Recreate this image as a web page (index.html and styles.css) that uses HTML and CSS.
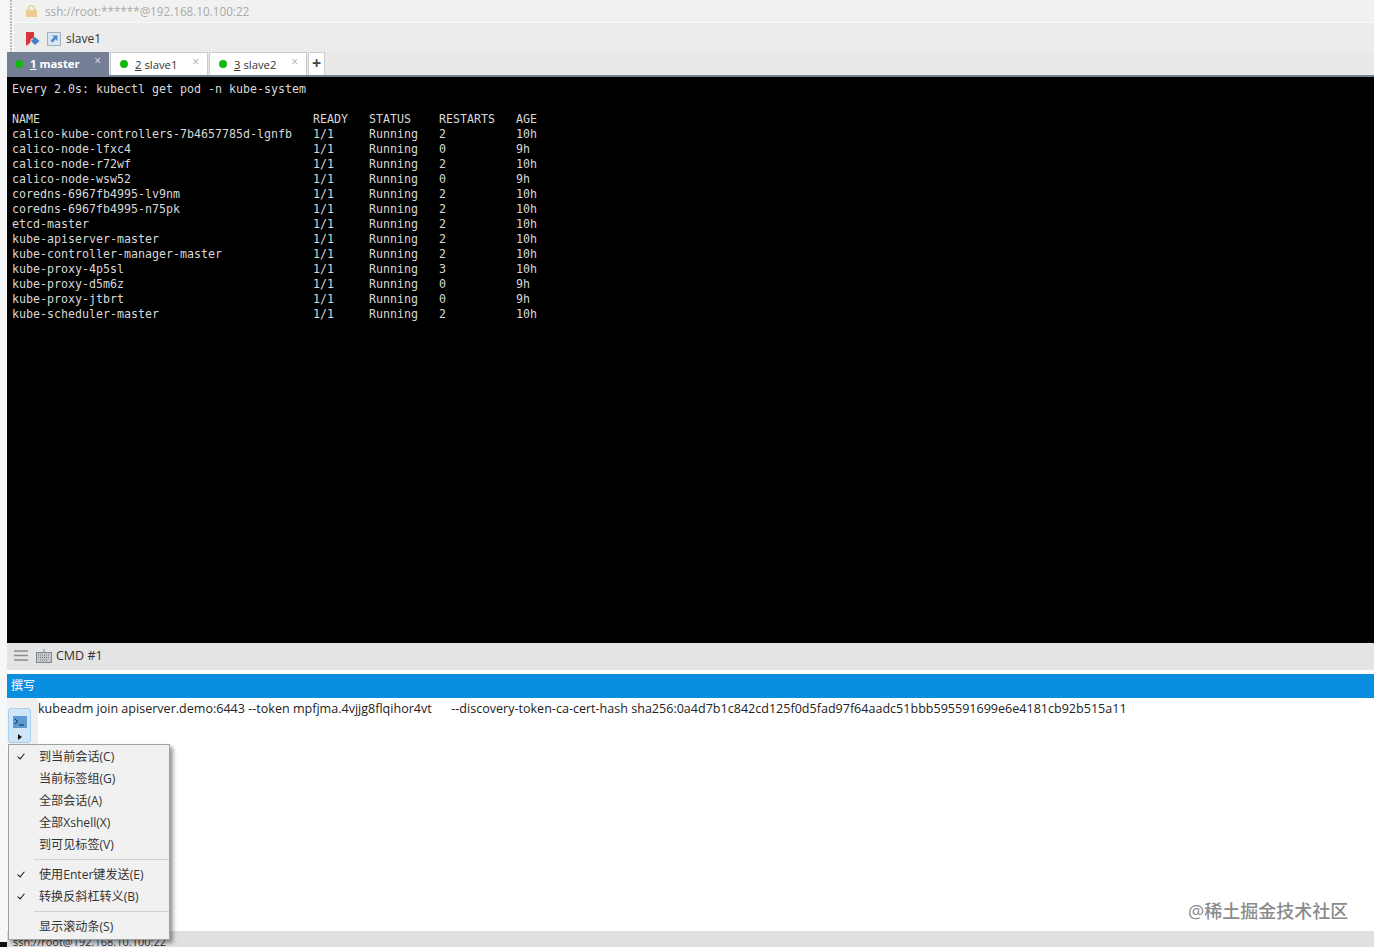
FILE: index.html
```html
<!DOCTYPE html>
<html lang="zh">
<head>
  <meta charset="UTF-8" />
  <title>Xshell</title>
  <link rel="stylesheet" href="styles.css">
</head>
<body>
  <div class="left-strip">
    <div class="strip-corner"></div>
  </div>
  <div class="app">

    <div class="top">
      <div class="grip"></div>
      <div class="top-rows">
        <!-- Address bar -->
        <div class="address-bar">
          <svg class="lock" width="11" height="12" viewBox="0 0 11 12">
            <path d="M2.500 5V3.500a3 3 0 0 1 6 0V5" fill="none" stroke="#e8cfa0" stroke-width="1.500"/>
            <rect y="5" width="11" height="7" fill="#eccb94"/>
          </svg>
          <span>ssh://root:******@192.168.10.100:22</span>
        </div>

        <!-- Links bar -->
        <div class="links-bar">
          <svg class="flag" width="14" height="14" viewBox="0 0 14 14">
            <path d="M0 0h8v6l-3 1-1 4-4 3z" fill="#d8343c"/>
            <path d="M9 5l4.500 4-4.500 4-4-4z" fill="#3f7fc4"/>
          </svg>
          <svg width="14" height="14" viewBox="0 0 14 14">
            <rect x=".5" y=".5" width="13" height="13" fill="#dbe6f0" stroke="#9fb0c0"/>
            <path d="M5 3.500h5.500v5.500l-1.800-1.800-3.200 3.200-1.900-1.900 3.200-3.200z" fill="#4a8cc8"/>
          </svg>
          <span>slave1</span>
        </div>
      </div>
    </div>

    <!-- Session tabs -->
    <div class="tabs">
      <div class="tab active">
        <i class="dot"></i><span class="tab-name"><u>1</u> master</span><span class="close">×</span>
      </div>
      <div class="tab">
        <i class="dot"></i><span class="tab-name"><u>2</u> slave1</span><span class="close">×</span>
      </div>
      <div class="tab">
        <i class="dot"></i><span class="tab-name"><u>3</u> slave2</span><span class="close">×</span>
      </div>
      <div class="tab-add">+</div>
    </div>

    <!-- Terminal -->
<pre class="terminal">Every 2.0s: kubectl get pod -n kube-system

NAME                                       READY   STATUS    RESTARTS   AGE
calico-kube-controllers-7b4657785d-lgnfb   1/1     Running   2          10h
calico-node-lfxc4                          1/1     Running   0          9h
calico-node-r72wf                          1/1     Running   2          10h
calico-node-wsw52                          1/1     Running   0          9h
coredns-6967fb4995-lv9nm                   1/1     Running   2          10h
coredns-6967fb4995-n75pk                   1/1     Running   2          10h
etcd-master                                1/1     Running   2          10h
kube-apiserver-master                      1/1     Running   2          10h
kube-controller-manager-master             1/1     Running   2          10h
kube-proxy-4p5sl                           1/1     Running   3          10h
kube-proxy-d5m6z                           1/1     Running   0          9h
kube-proxy-jtbrt                           1/1     Running   0          9h
kube-scheduler-master                      1/1     Running   2          10h</pre>

    <!-- Quick command bar -->
    <div class="cmd-bar">
      <svg class="burger" width="14" height="11" viewBox="0 0 14 11">
        <path d="M0 1h14M0 5.500h14M0 10h14" stroke="#8a8a8a" stroke-width="1.500"/>
      </svg>
      <svg width="16" height="14" viewBox="0 0 16 14">
        <rect x=".5" y="3.500" width="15" height="10" fill="#c4c8cc" stroke="#80868c"/>
        <path d="M2 6h12M2 8.500h12M4 11h8" stroke="#70767c" stroke-dasharray="1 1"/>
        <path d="M8 3.500V0" stroke="#80868c"/>
      </svg>
      <span>CMD #1</span>
    </div>

    <!-- Compose pane -->
    <div class="compose-title">撰写</div>
    <div class="compose">
      <div class="send-col">
        <div class="send-btn">
          <svg width="14" height="12" viewBox="0 0 14 12">
            <rect width="14" height="12" fill="#5b9ad3"/>
            <path d="M2 3l3 2.500-3 2.500M6 9h5" fill="none" stroke="#12263a" stroke-width="1"/>
          </svg>
          <svg width="4" height="6" viewBox="0 0 4 6"><path d="M0 0l4 3-4 3z" fill="#111"/></svg>
        </div>
      </div>
      <div class="compose-text">kubeadm join apiserver.demo:6443 --token mpfjma.4vjjg8flqihor4vt &nbsp; &nbsp; &nbsp;--discovery-token-ca-cert-hash sha256:0a4d7b1c842cd125f0d5fad97f64aadc51bbb595591699e6e4181cb92b515a11</div>
    </div>

    <div class="status-bar">ssh://root@192.168.10.100:22</div>
  </div>

  <!-- Dropdown -->
  <div class="menu">
    <div class="menu-item checked">到当前会话(C)</div>
    <div class="menu-item">当前标签组(G)</div>
    <div class="menu-item">全部会话(A)</div>
    <div class="menu-item">全部Xshell(X)</div>
    <div class="menu-item">到可见标签(V)</div>
    <div class="menu-sep"></div>
    <div class="menu-item checked">使用Enter键发送(E)</div>
    <div class="menu-item checked">转换反斜杠转义(B)</div>
    <div class="menu-sep"></div>
    <div class="menu-item">显示滚动条(S)</div>
  </div>

  <div class="watermark">@稀土掘金技术社区</div>
</body>
</html>
```

FILE: styles.css
```css
html, body {
  height: 100%;
}
body {
  margin: 0;
  display: flex;
  overflow: hidden;
  background: #fff;
  font-family: "Open Sans", "Noto Sans CJK SC", sans-serif;
  color: #222;
}
.left-strip {
  width: 7px;
  flex-shrink: 0;
  display: flex;
  flex-direction: column;
  justify-content: flex-end;
  background: #f7f7f7;
}
.strip-corner {
  height: 5px;
  background: #111;
}
.app {
  flex: 1;
  min-width: 0;
  display: flex;
  flex-direction: column;
}
.top {
  display: flex;
}
.grip {
  width: 7px;
  flex-shrink: 0;
  background-color: #f4f4f4;
  background-image: repeating-linear-gradient(to bottom, #bdbdbd 0 2px, transparent 2px 3px);
  background-size: 2px 100%;
  background-position: 3px 0;
  background-repeat: no-repeat;
}
.top-rows {
  flex: 1;
}
.address-bar {
  height: 23px;
  box-sizing: border-box;
  display: flex;
  align-items: center;
  gap: 8px;
  padding-left: 12px;
  background: #f1f1f1;
  color: #a9a9a9;
  font-size: 11.700px;
  border-bottom: 1px solid #fafafa;
}
.links-bar {
  height: 29px;
  display: flex;
  align-items: center;
  gap: 5px;
  padding: 2px 0 0 12px;
  box-sizing: border-box;
  background: #ececec;
  font-size: 12px;
  color: #333;
}
.flag {
  margin-right: 2px;
}
.tabs {
  height: 23px;
  display: flex;
  gap: 1px;
  background: #e9e9e9;
  border-bottom: 2px solid #747f96;
}
.tab {
  width: 98px;
  display: flex;
  align-items: center;
  padding-left: 9px;
  box-sizing: border-box;
  background: #fff;
  border: 1px solid #ccc;
  border-bottom: none;
  font-size: 11.300px;
  color: #333;
  position: relative;
}
.tab.active {
  width: 102px;
  padding-left: 8px;
  background: #747f96;
  border: none;
  color: #fff;
  font-weight: bold;
}
.dot {
  width: 8px;
  height: 8px;
  border-radius: 50%;
  background: #10b810;
  margin-right: 7px;
}
.close {
  position: absolute;
  right: 8px;
  top: 0;
  font-size: 12px;
  font-weight: normal;
  color: #aaa;
}
.tab.active .close {
  color: #dde;
}
.tab-add {
  width: 17px;
  box-sizing: border-box;
  background: #fff;
  border: 1px solid #ccc;
  border-bottom: none;
  text-align: center;
  font-size: 16px;
  font-weight: bold;
  line-height: 20px;
  color: #444;
}
.terminal {
  height: 566px;
  margin: 0;
  padding: 5px 5px 0;
  box-sizing: border-box;
  background: #000;
  color: #d8d8d8;
  font-family: "DejaVu Sans Mono", monospace;
  font-size: 11.630px;
  line-height: 15px;
  overflow: hidden;
}
.cmd-bar {
  height: 27px;
  display: flex;
  align-items: center;
  gap: 4px;
  padding: 0 0 2px 7px;
  box-sizing: border-box;
  background: #e4e4e4;
  font-size: 12.500px;
  color: #333;
}
.burger {
  margin-right: 4px;
}
.compose-title {
  height: 24px;
  margin-top: 4px;
  padding-left: 4px;
  background: #0a8fe0;
  color: #fff;
  font-size: 12px;
  line-height: 24px;
}
.compose {
  flex: 1;
  display: flex;
  background: #fff;
}
.send-col {
  width: 31px;
  flex-shrink: 0;
  background: #f0f0f0;
  padding: 10px 0 0 1px;
  box-sizing: border-box;
  height: 46px;
}
.send-btn {
  width: 23px;
  height: 35px;
  padding-top: 5px;
  box-sizing: border-box;
  display: flex;
  flex-direction: column;
  align-items: center;
  justify-content: center;
  gap: 6px;
  background: #cfe6f8;
  border: 1px solid #a6d0f0;
  border-radius: 3px;
}
.compose-text {
  font-size: 12.550px;
  line-height: 21px;
  color: #222;
  white-space: nowrap;
}
.status-bar {
  height: 16px;
  padding-left: 6px;
  background: #e0e0e0;
  font-size: 11px;
  line-height: 22px;
  color: #333;
  overflow: hidden;
}
.menu {
  position: absolute;
  left: 8px;
  top: 744px;
  width: 162px;
  height: 196px;
  padding-top: 1px;
  box-sizing: border-box;
  background: #f1f1f1;
  border: 1px solid #a0a0a0;
  box-shadow: 3px 3px 4px rgba(0, 0, 0, 0.4);
  font-size: 12.100px;
  color: #333;
}
.menu-item {
  height: 22px;
  line-height: 22px;
  padding-left: 30px;
  position: relative;
  white-space: nowrap;
}
.menu-item.checked::before {
  content: "";
  position: absolute;
  left: 10px;
  top: 6px;
  width: 3px;
  height: 6px;
  border-right: 1.500px solid #111;
  border-bottom: 1.500px solid #111;
  transform: rotate(40deg);
}
.menu-sep {
  height: 1px;
  margin: 3px 0 4px 25px;
  background: #d2d2d2;
}
.watermark {
  position: absolute;
  left: 1188px;
  top: 897px;
  font-size: 18px;
  color: #8a8a8a;
  font-weight: 500;
  white-space: nowrap;
}
```
